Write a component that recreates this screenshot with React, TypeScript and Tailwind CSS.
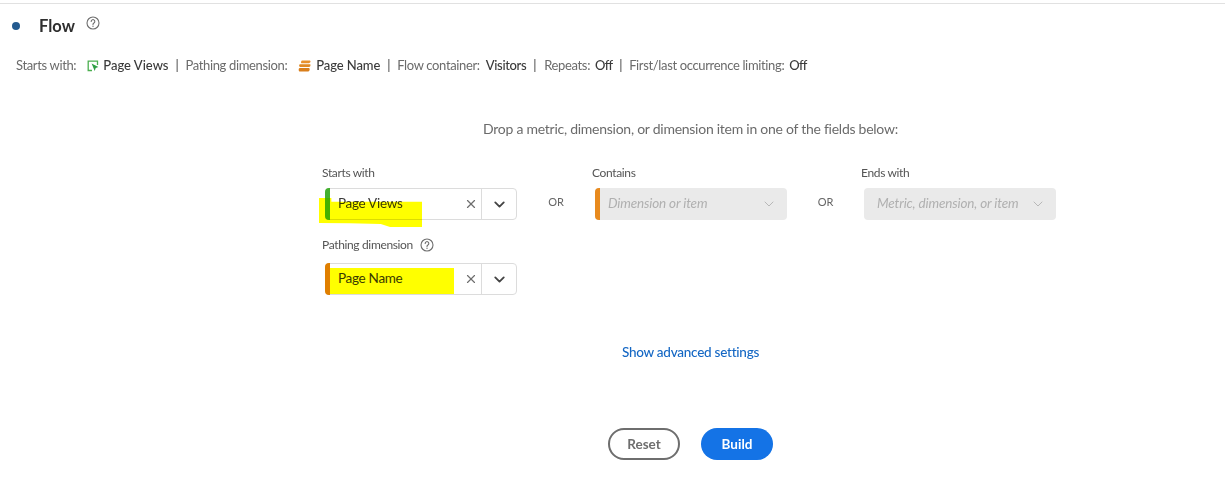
import { ChevronDown, X } from "lucide-react";

const font = { fontFamily: '"Lato", "Liberation Sans", sans-serif' };

function HelpIcon({ className }: { className: string }) {
  return (
    <svg viewBox="0 0 14 14" fill="none" className={className} aria-hidden="true">
      <circle cx="7" cy="7" r="6" stroke="#6e6e6e" strokeWidth="1.1" />
      <path d="M5.2 5.4a1.8 1.8 0 1 1 2.7 1.6c-.6.35-.9.7-.9 1.4" stroke="#6e6e6e" strokeWidth="1.1" strokeLinecap="round" />
      <circle cx="7" cy="10.2" r=".7" fill="#6e6e6e" />
    </svg>
  );
}

function MetricIcon() {
  return (
    <svg viewBox="0 0 12 12" fill="none" className="h-[12px] w-[12px]" aria-hidden="true">
      <path d="M5 10.500H1.200V1.200h9.300V5" stroke="#4caf50" strokeWidth="1.300" />
      <path d="M4.600 3.400l6.800 3.700-2.700 1-1 3z" fill="#2e9e44" />
    </svg>
  );
}

function DimensionIcon() {
  return (
    <svg viewBox="0 0 12 12" className="h-[13px] w-[13px]" aria-hidden="true">
      <path d="M4 .5h6.400c1 0 1.300.6 1.100 1.200-.2.900-1 1.400-2 1.400H3.600C2.400 3.100 2.600.5 4 .5z" fill="#e8912c" />
      <path d="M2 4h8.800c.6 0 .8.400.7 1-.1.900-1 1.500-1.900 1.500H2C.8 6.500.7 4 2 4z" fill="#e08a24" />
      <path d="M1.600 7.300h8.600c.8 0 .9 2.200-.2 3-.4.300-.9.400-1.400.4H1.800c-1.500 0-1.500-3.400-.2-3.400z" fill="#d97f1c" />
    </svg>
  );
}

function Highlight({ className }: { className: string }) {
  return <span className={`pointer-events-none absolute bg-[#ffff00] mix-blend-multiply ${className}`} />;
}

function FilledField({ value, barColor, highlight }: { value: string; barColor: string; highlight: string }) {
  return (
    <div className="relative flex h-[32px] w-[192px] items-center rounded-[4px] border border-[#dcdcdc] bg-white">
      <span className={`-ml-px h-[32px] w-[5px] shrink-0 rounded-l-[4px] ${barColor}`} />
      <span className="ml-[8px] flex-1 pb-[2px] text-[13.5px] tracking-[-0.3px] text-[#3a3a3a]">{value}</span>
      <X size={14} strokeWidth={2} className="mr-[3px] text-[#6e6e6e]" />
      <div className="flex h-full w-[35px] items-center justify-center border-l border-[#dcdcdc]">
        <ChevronDown size={17} strokeWidth={2.6} className="text-[#444444]" />
      </div>
      <Highlight className={highlight} />
    </div>
  );
}

function DisabledField({ placeholder, barColor }: { placeholder: string; barColor?: string }) {
  return (
    <div className="flex h-[32px] w-[192px] items-center overflow-hidden rounded-[4px] bg-[#eaeaea]">
      {barColor ? <span className={`h-full w-[5px] shrink-0 ${barColor}`} /> : null}
      <span className={`flex-1 pb-[2px] text-[13.5px] italic tracking-[-0.15px] text-[#b0b0b0] ${barColor ? "ml-[8px]" : "ml-[13px]"}`}>
        {placeholder}
      </span>
      <ChevronDown size={16} strokeWidth={1.5} className="mr-[10px] text-[#b8b8b8]" />
    </div>
  );
}

function Sep({ className = "mx-[7px]" }: { className?: string }) {
  return <span className={`text-[#444444] ${className}`}>|</span>;
}

export default function App() {
  return (
    <div style={font} className="h-[500px] w-[1225px] overflow-hidden bg-white">
      <div className="mt-[3px] h-px bg-[#e1e1e1]" />

      <div className="mt-[10px] flex h-[24px] items-center pl-[12px]">
        <span className="h-[8px] w-[8px] rounded-full bg-[#235a8f]" />
        <span className="ml-[19px] text-[16.5px] font-bold text-[#2f2f2f]">Flow</span>
        <HelpIcon className="mb-[6px] ml-[11px] h-[14px] w-[14px]" />
      </div>

      <div className="mt-[18px] flex h-[20px] items-center whitespace-nowrap pl-[16px] text-[13px] tracking-[-0.35px] text-[#6b6b6b]">
        <span>Starts with:</span>
        <span className="ml-[11px] mr-[4px]"><MetricIcon /></span>
        <span className="font-medium tracking-normal text-[#3a3a3a]">Page Views</span>
        <Sep />
        <span>Pathing dimension:</span>
        <span className="ml-[11px] mr-[5px]"><DimensionIcon /></span>
        <span className="font-medium tracking-[-0.1px] text-[#3a3a3a]">Page Name</span>
        <Sep />
        <span>Flow container:</span>
        <span className="ml-[6px] font-medium text-[#3a3a3a]">Visitors</span>
        <Sep className="ml-[7px] mr-[8px]" />
        <span>Repeats:</span>
        <span className="ml-[5px] font-medium tracking-[-0.8px] text-[#3a3a3a]">Off</span>
        <Sep />
        <span>First/last occurrence limiting:</span>
        <span className="ml-[5px] font-medium tracking-[-0.8px] text-[#3a3a3a]">Off</span>
      </div>

      <div className="ml-[325px] w-[731px]">
        <p className="mt-[42px] text-center text-[14px] tracking-[-0.26px] text-[#6b6b6b]">
          Drop a metric, dimension, or dimension item in one of the fields below:
        </p>

        <div className="mt-[25px] flex items-start">
          <div className="w-[192px]">
            <div className="-ml-[3px] mb-[7px] text-[12px] leading-[17px] tracking-[-0.35px] text-[#555555]">Starts with</div>
            <FilledField
              value="Page Views"
              barColor="bg-[#44b02f]"
              highlight="-left-[7px] top-[9px] h-[29px] w-[103px] [clip-path:polygon(0%_0%,12%_0%,12%_13%,100%_13%,100%_100%,69%_100%,60%_90%,30%_87%,0%_86%)]"
            />
            <div className="-ml-[3px] mb-[10px] mt-[16px] flex items-center text-[12px] leading-[17px] tracking-[-0.35px] text-[#555555]">
              Pathing dimension
              <HelpIcon className="ml-[7px] h-[14px] w-[14px]" />
            </div>
            <FilledField value="Page Name" barColor="bg-[#e07f00]" highlight="left-[4px] top-[4px] h-[26px] w-[124px]" />
          </div>

          <span className="mt-[30px] w-[78px] text-center text-[11px] text-[#666666]">OR</span>

          <div className="w-[192px]">
            <div className="-ml-[3px] mb-[7px] text-[12px] leading-[17px] tracking-[-0.35px] text-[#555555]">Contains</div>
            <DisabledField placeholder="Dimension or item" barColor="bg-[#e88a1e]" />
          </div>

          <span className="mt-[30px] w-[77px] text-center text-[11px] text-[#666666]">OR</span>

          <div className="w-[192px]">
            <div className="-ml-[3px] mb-[7px] text-[12px] leading-[17px] tracking-[-0.35px] text-[#555555]">Ends with</div>
            <DisabledField placeholder="Metric, dimension, or item" />
          </div>
        </div>

        <div className="mt-[47px] text-center text-[13.5px] font-medium tracking-[-0.25px] text-[#1467c4]">Show advanced settings</div>

        <div className="mt-[66px] flex justify-center gap-[21px]">
          <button type="button" className="h-[32px] w-[72px] rounded-full border-2 border-[#6e6e6e] text-[13.5px] font-bold text-[#6e6e6e]">
            Reset
          </button>
          <button type="button" className="h-[32px] w-[72px] rounded-full bg-[#1473e6] text-[13.5px] font-bold text-white">
            Build
          </button>
        </div>
      </div>
    </div>
  );
}
